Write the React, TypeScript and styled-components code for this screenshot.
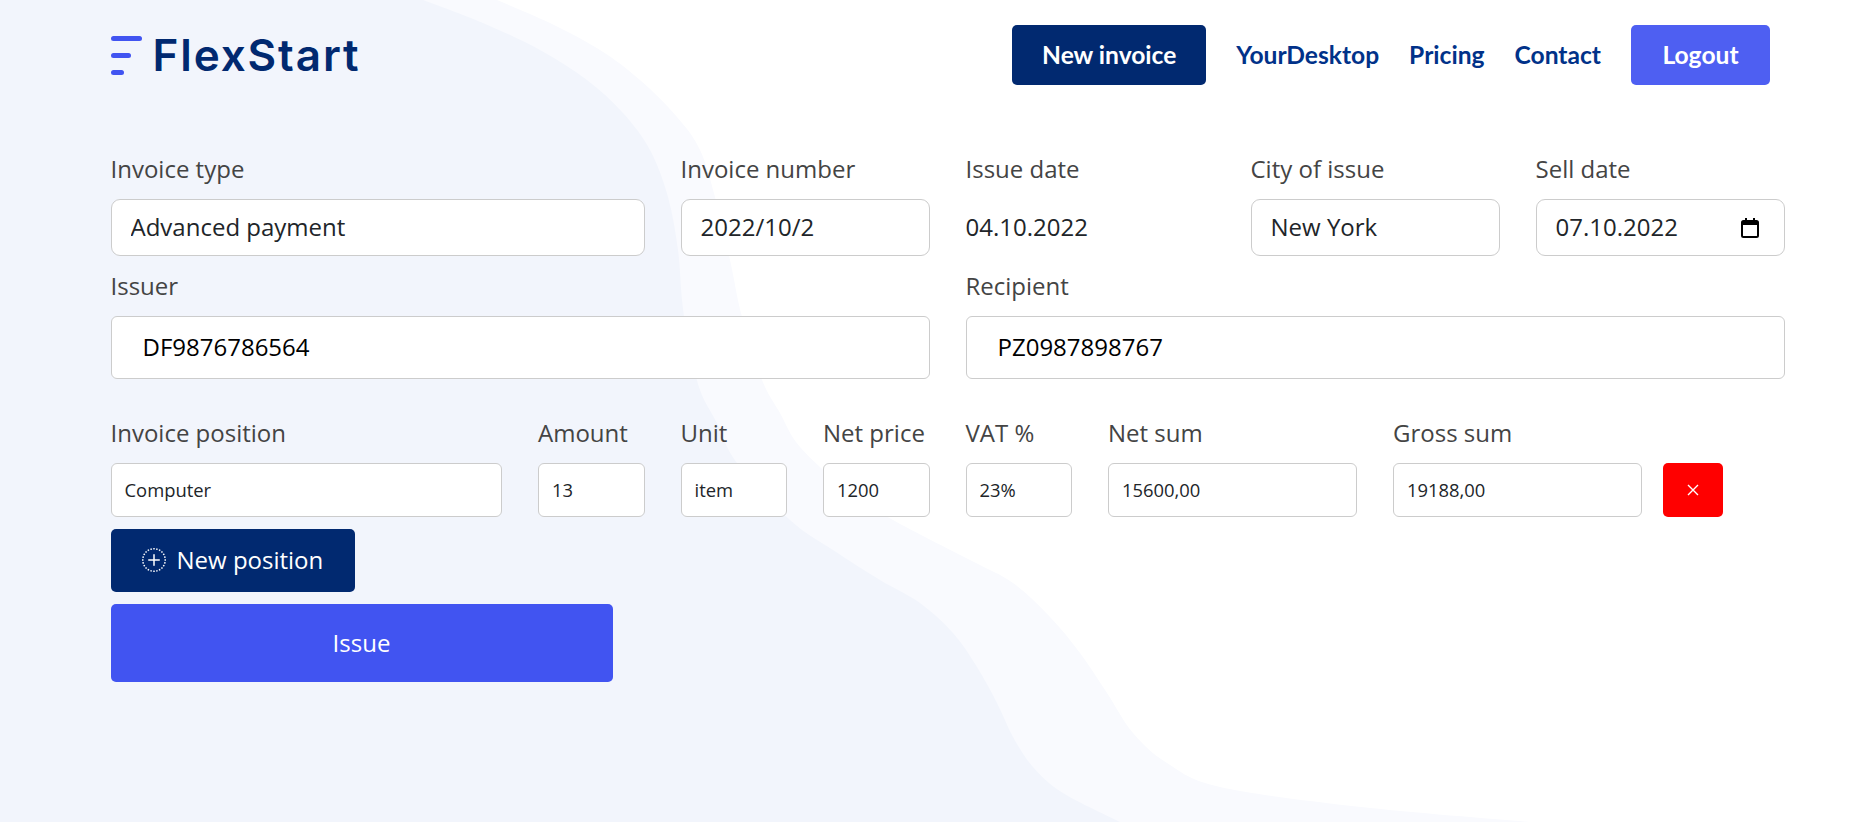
import styled, { createGlobalStyle } from 'styled-components'
import { BsPlusCircleDotted } from 'react-icons/bs'

const GlobalStyle = createGlobalStyle`
  html, body {
    margin: 0;
    height: 100%;
    background: #fff;
    overflow: hidden;
  }
  * {
    box-sizing: border-box;
  }
`

const Page = styled.div`
  position: relative;
  isolation: isolate;
  height: 822px;
  padding: 25px 0 0 110.5px;
  font-family: 'Open Sans', sans-serif;
  color: #212529;
`

const Wave = styled.svg`
  position: absolute;
  top: 0;
  left: 0;
  z-index: -1;
`

const Header = styled.header`
  display: flex;
  align-items: center;
  justify-content: space-between;
  width: 1659.5px;
  height: 60px;
`

const Logo = styled.a`
  display: flex;
  align-items: center;
  gap: 11px;
  font-family: Inter, sans-serif;
  font-size: 44px;
  font-weight: 600;
  letter-spacing: 1.9px;
  color: #012970;
`

const Nav = styled.nav`
  display: flex;
  align-items: center;
  gap: 30px;
  font-family: Lato, sans-serif;
  font-size: 24.6px;
  font-weight: 700;
`

const NavLink = styled.a`
  padding-bottom: 2px;
  color: #013289;
`

const NavButton = styled.a<{ $bg: string; $width: number }>`
  display: flex;
  align-items: center;
  justify-content: center;
  width: ${(p) => p.$width}px;
  height: 60px;
  padding-bottom: 2px;
  border-radius: 5px;
  background: ${(p) => p.$bg};
  color: #fff;
`

const Form = styled.form`
  display: grid;
  grid-template-columns: repeat(12, 106.5px);
  column-gap: 36px;
  margin-top: 66px;
`

const Field = styled.div<{ $span: number }>`
  grid-column: span ${(p) => p.$span};
  margin-bottom: 12px;
`

const Label = styled.label`
  display: block;
  margin-bottom: 12px;
  font-size: 24px;
  line-height: 36px;
  color: #444;
`

const Input = styled.input`
  display: block;
  width: 100%;
  height: 57px;
  padding: 0 19px 2px;
  border: 1px solid #ccc;
  border-radius: 9px;
  background: #fff;
  font-family: inherit;
  font-size: 24px;
  color: #212529;
  outline: none;
`

const PartyInput = styled(Input)`
  height: 63px;
  padding: 0 31px 2px;
  border-radius: 6px;
  color: #000;
`

const PositionRow = styled.div`
  display: grid;
  grid-column: 1 / -1;
  grid-template-columns: repeat(12, 106.5px);
  column-gap: 36px;
  margin-top: 24px;
`

const PositionField = styled.div<{ $span: number }>`
  grid-column: span ${(p) => p.$span};
`

const PositionInput = styled(Input)`
  height: 54px;
  padding: 0 13px 2px;
  border-radius: 6px;
  font-size: 18.4px;
`

const DateText = styled.div`
  display: flex;
  align-items: center;
  height: 57px;
  padding-bottom: 2px;
  font-size: 24px;
`

const DateBox = styled.div`
  display: flex;
  align-items: center;
  justify-content: space-between;
  height: 57px;
  padding: 0 25px 0 19px;
  border: 1px solid #ccc;
  border-radius: 9px;
  background: #fff;
`

const DateInput = styled.input`
  width: 150px;
  padding: 0 0 2px;
  border: 0;
  background: transparent;
  font-family: inherit;
  font-size: 24px;
  color: #212529;
  outline: none;
`

const RemoveButton = styled.button`
  display: flex;
  align-items: center;
  justify-content: center;
  width: 60px;
  height: 54px;
  margin: 48px 0 0 -15px;
  border: 0;
  border-radius: 5px;
  background: #f00;
`

const Actions = styled.div`
  display: flex;
  flex-direction: column;
  align-items: flex-start;
  gap: 12px;
  margin-top: 12px;
`

const AddButton = styled.button`
  display: flex;
  align-items: center;
  gap: 11px;
  width: 244px;
  height: 63px;
  padding: 0 0 2px 31px;
  border: 0;
  border-radius: 5px;
  background: #012970;
  font-family: inherit;
  font-size: 24px;
  color: #fff;
`

const SubmitButton = styled.button`
  width: 502px;
  height: 78px;
  padding: 0 0 2px;
  border: 0;
  border-radius: 5px;
  background: #4154f1;
  font-family: inherit;
  font-size: 24px;
  color: #fff;
`

// smooth line through the points, traced from the background picture
function spline(pts: number[][]) {
  let d = `M${pts[0][0]} ${pts[0][1]}`
  for (let i = 0; i < pts.length - 1; i++) {
    const p0 = pts[Math.max(i - 1, 0)]
    const p1 = pts[i]
    const p2 = pts[i + 1]
    const p3 = pts[Math.min(i + 2, pts.length - 1)]
    const c1 = [p1[0] + (p2[0] - p0[0]) / 6, p1[1] + (p2[1] - p0[1]) / 6]
    const c2 = [p2[0] - (p3[0] - p1[0]) / 6, p2[1] - (p3[1] - p1[1]) / 6]
    d += `C${c1[0]} ${c1[1]} ${c2[0]} ${c2[1]} ${p2[0]} ${p2[1]}`
  }
  return d
}

const outerEdge = [
  [497, 0], [550, 23], [600, 50], [640, 80], [677, 117], [700, 150], [715, 197], [730, 260],
  [742, 317], [762, 380], [780, 413], [800, 447], [847, 490], [893, 520], [970, 560], [1013, 583],
  [1050, 617], [1080, 653], [1107, 693], [1133, 733], [1167, 763], [1220, 787], [1361, 807], [1530, 822],
]

const innerEdge = [
  [423, 0], [483, 23], [540, 50], [587, 80], [623, 113], [650, 150], [668, 197], [678, 250],
  [682, 300], [688, 340], [700, 390], [717, 423], [737, 463], [790, 520], [833, 550], [880, 580],
  [920, 603], [953, 633], [977, 667], [997, 703], [1013, 737], [1033, 767], [1063, 793], [1120, 822],
]

function Background() {
  return (
    <Wave width="1850" height="822" viewBox="0 0 1850 822">
      <path d={`${spline(outerEdge)}L0 822L0 0Z`} fill="#f9fafe" />
      <path d={`${spline(innerEdge)}L0 822L0 0Z`} fill="#f2f5fc" />
    </Wave>
  )
}

function LogoMark() {
  return (
    <svg width="31" height="39" viewBox="0 0 31 39" fill="#4154f1">
      <rect x="0" y="0" width="31" height="5" rx="2.5" />
      <rect x="0" y="17" width="20" height="5" rx="2.5" />
      <rect x="0" y="34" width="13" height="5" rx="2.5" />
    </svg>
  )
}

function CalendarIcon() {
  return (
    <svg width="18" height="20" viewBox="0 0 18 20" fill="none">
      <rect x="1" y="3" width="16" height="16" rx="1.5" stroke="#000" strokeWidth="2" />
      <rect x="1" y="3" width="16" height="4" fill="#000" />
      <rect x="4" y="0" width="2" height="4" fill="#000" />
      <rect x="12" y="0" width="2" height="4" fill="#000" />
    </svg>
  )
}

function CloseIcon() {
  return (
    <svg width="12" height="12" viewBox="0 0 12 12" stroke="#fff" strokeWidth="1.4">
      <path d="M1 1L11 11M11 1L1 11" />
    </svg>
  )
}

const positionFields = [
  { label: 'Invoice position', value: 'Computer', span: 3 },
  { label: 'Amount', value: '13', span: 1 },
  { label: 'Unit', value: 'item', span: 1 },
  { label: 'Net price', value: '1200', span: 1 },
  { label: 'VAT %', value: '23%', span: 1 },
  { label: 'Net sum', value: '15600,00', span: 2 },
  { label: 'Gross sum', value: '19188,00', span: 2 },
]

export default function App() {
  return (
    <Page>
      <GlobalStyle />
      <Background />
      <Header>
        <Logo>
          <LogoMark />
          FlexStart
        </Logo>
        <Nav>
          <NavButton $bg="#012970" $width={194}>New invoice</NavButton>
          <NavLink>YourDesktop</NavLink>
          <NavLink>Pricing</NavLink>
          <NavLink>Contact</NavLink>
          <NavButton $bg="#4e5ff2" $width={139}>Logout</NavButton>
        </Nav>
      </Header>
      <Form>
        <Field $span={4}>
          <Label>Invoice type</Label>
          <Input defaultValue="Advanced payment" />
        </Field>
        <Field $span={2}>
          <Label>Invoice number</Label>
          <Input defaultValue="2022/10/2" />
        </Field>
        <Field $span={2}>
          <Label>Issue date</Label>
          <DateText>04.10.2022</DateText>
        </Field>
        <Field $span={2}>
          <Label>City of issue</Label>
          <Input defaultValue="New York" />
        </Field>
        <Field $span={2}>
          <Label>Sell date</Label>
          <DateBox>
            <DateInput defaultValue="07.10.2022" />
            <CalendarIcon />
          </DateBox>
        </Field>
        <Field $span={6}>
          <Label>Issuer</Label>
          <PartyInput defaultValue="DF9876786564" />
        </Field>
        <Field $span={6}>
          <Label>Recipient</Label>
          <PartyInput defaultValue="PZ0987898767" />
        </Field>
        <PositionRow>
          {positionFields.map((f) => (
            <PositionField key={f.label} $span={f.span}>
              <Label>{f.label}</Label>
              <PositionInput defaultValue={f.value} />
            </PositionField>
          ))}
          <RemoveButton type="button">
            <CloseIcon />
          </RemoveButton>
        </PositionRow>
      </Form>
      <Actions>
        <AddButton type="button">
          <BsPlusCircleDotted size={24} />
          New position
        </AddButton>
        <SubmitButton type="button">Issue</SubmitButton>
      </Actions>
    </Page>
  )
}
